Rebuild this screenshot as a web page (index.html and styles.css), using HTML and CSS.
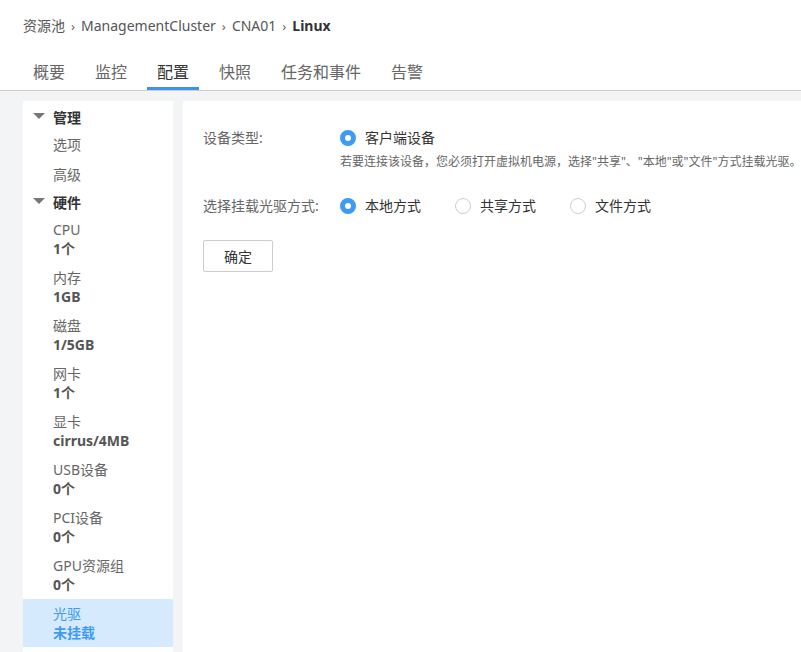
FILE: index.html
```html
<!DOCTYPE html>
<html lang="zh-CN">
<head>
<meta charset="utf-8">
<title>Linux - 配置</title>
<link rel="stylesheet" href="styles.css">
</head>
<body>
<div class="page">
  <header class="top">
    <nav class="crumbs">
      <span class="crumb">资源池</span><span class="sep">›</span>
      <span class="crumb">ManagementCluster</span><span class="sep">›</span>
      <span class="crumb">CNA01</span><span class="sep">›</span>
      <span class="crumb current">Linux</span>
    </nav>
    <div class="tabs">
      <span class="tab">概要</span>
      <span class="tab">监控</span>
      <span class="tab active">配置</span>
      <span class="tab">快照</span>
      <span class="tab">任务和事件</span>
      <span class="tab">告警</span>
    </div>
  </header>
  <div class="body">
    <aside class="side">
      <div class="group">
        <div class="group-head"><span class="caret"></span>管理</div>
        <div class="item single">选项</div>
        <div class="item single">高级</div>
      </div>
      <div class="group">
        <div class="group-head"><span class="caret"></span>硬件</div>
        <div class="item"><div class="name">CPU</div><div class="val">1个</div></div>
        <div class="item"><div class="name">内存</div><div class="val">1GB</div></div>
        <div class="item"><div class="name">磁盘</div><div class="val">1/5GB</div></div>
        <div class="item"><div class="name">网卡</div><div class="val">1个</div></div>
        <div class="item"><div class="name">显卡</div><div class="val">cirrus/4MB</div></div>
        <div class="item"><div class="name">USB设备</div><div class="val">0个</div></div>
        <div class="item"><div class="name">PCI设备</div><div class="val">0个</div></div>
        <div class="item"><div class="name">GPU资源组</div><div class="val">0个</div></div>
        <div class="item selected"><div class="name">光驱</div><div class="val">未挂载</div></div>
      </div>
    </aside>
    <main class="main">
      <div class="row">
        <div class="label">设备类型:</div>
        <div class="field">
          <div class="options">
            <label class="opt"><span class="radio on"></span><span class="opt-text">客户端设备</span></label>
          </div>
          <div class="hint">若要连接该设备，您必须打开虚拟机电源，选择"共享"、"本地"或"文件"方式挂载光驱。</div>
        </div>
      </div>
      <div class="row row2">
        <div class="label">选择挂载光驱方式:</div>
        <div class="field">
          <div class="options">
            <label class="opt"><span class="radio on"></span><span class="opt-text">本地方式</span></label>
            <label class="opt"><span class="radio"></span><span class="opt-text">共享方式</span></label>
            <label class="opt"><span class="radio"></span><span class="opt-text">文件方式</span></label>
          </div>
        </div>
      </div>
      <button class="btn" type="button">确定</button>
    </main>
  </div>
</div>
</body>
</html>
```
FILE: styles.css
```css
* { box-sizing: border-box; }
html, body { margin: 0; padding: 0; }
body {
  font-family: "Noto Sans", "Noto Sans CJK SC", sans-serif;
  color: #666;
  background: #fff;
  width: 801px;
  height: 652px;
  overflow: hidden;
}
.page { display: flex; flex-direction: column; height: 652px; }
.top { padding: 0 0 0 23px; border-bottom: 1px solid #cfcfcf; }
.crumbs {
  display: flex;
  align-items: center;
  height: 20px;
  margin-top: 16px;
  font-size: 14px;
  line-height: 20px;
  color: #555;
}
.sep { color: #666; padding: 0 6px; font-size: 13px; }
.current { color: #333; font-weight: bold; }
.tabs { display: flex; gap: 10px; margin-top: 25px; }
.tab {
  font-size: 16px;
  line-height: 22px;
  padding: 0 10px 4px;
  color: #666;
  border-bottom: 3px solid transparent;
}
.tab.active { color: #333; border-bottom-color: #3b93ea; }
.body {
  flex: 1;
  display: flex;
  gap: 10px;
  background: #f3f4f6;
  padding: 10px 0 0 23px;
  overflow: hidden;
}
.side {
  width: 150px;
  flex: none;
  background: #fff;
  padding-top: 5px;
}
.group + .group { margin-top: 1px; }
.group-head {
  position: relative;
  height: 24px;
  line-height: 24px;
  padding-left: 30px;
  font-size: 14px;
  font-weight: bold;
  color: #333;
}
.caret {
  position: absolute;
  left: 10px;
  top: 7px;
  width: 0;
  height: 0;
  border-left: 6px solid transparent;
  border-right: 6px solid transparent;
  border-top: 6px solid #777;
}
.item {
  padding: 5px 0 5px 30px;
  font-size: 14px;
  line-height: 19px;
  color: #666;
}
.item.single { height: 30px; line-height: 20px; }
.val { font-weight: bold; color: #555; }
.item.selected { background: #d5eafd; color: #3d9af5; }
.item.selected .val { color: #3d9af5; }
.main {
  flex: 1;
  background: #fff;
  padding: 27px 0 0 20px;
  min-width: 0;
}
.row { display: flex; }
.row2 { margin-top: 25px; }
.label {
  width: 137px;
  flex: none;
  font-size: 14px;
  line-height: 20px;
  color: #666;
}
.options { display: flex; height: 20px; align-items: center; }
.opt {
  display: flex;
  align-items: center;
  width: 115px;
  font-size: 14px;
  line-height: 20px;
  color: #333;
}
.radio {
  width: 16px;
  height: 16px;
  border-radius: 50%;
  border: 1px solid #cfcfcf;
  background: #fff;
  margin-right: 9px;
  flex: none;
}
.radio.on { border: 5px solid #3d9af5; }
.hint {
  margin-top: 5px;
  font-size: 12px;
  line-height: 18px;
  color: #666;
  white-space: nowrap;
}
.btn {
  display: block;
  margin-top: 24px;
  width: 70px;
  height: 32px;
  border: 1px solid #ccc;
  border-radius: 2px;
  background: #fff;
  font-family: inherit;
  font-size: 14px;
  color: #333;
  padding: 0;
}
```
